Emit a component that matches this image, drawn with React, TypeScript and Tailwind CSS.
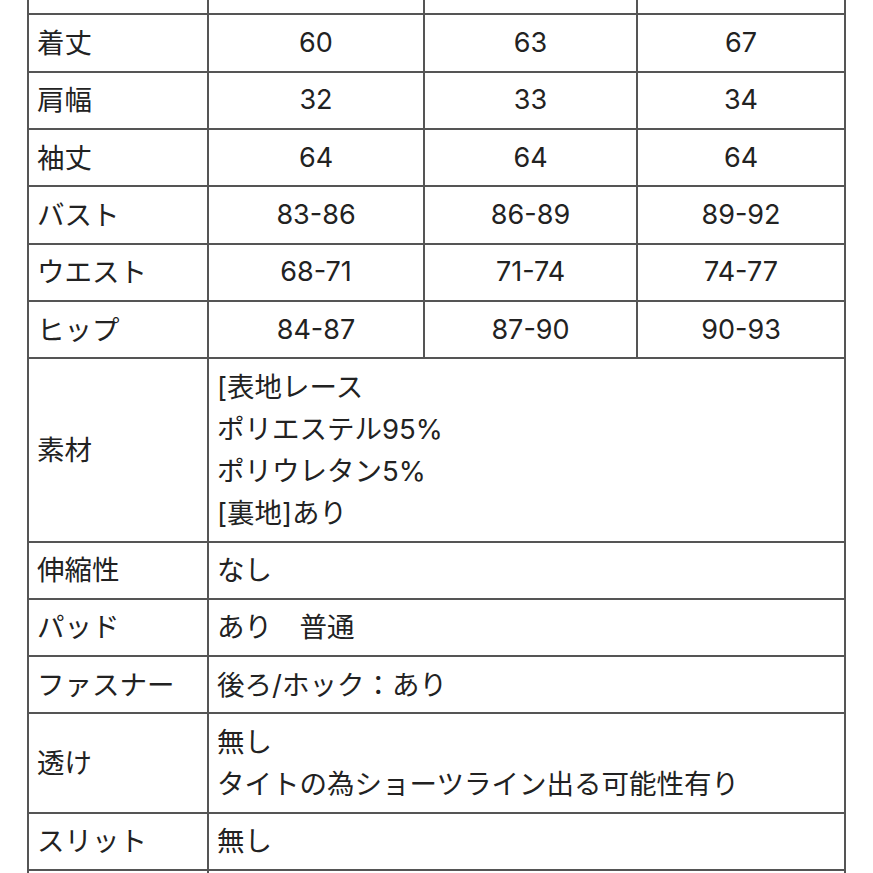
const sizes = [
  { label: '着丈', values: ['60', '63', '67'] },
  { label: '肩幅', values: ['32', '33', '34'] },
  { label: '袖丈', values: ['64', '64', '64'] },
  { label: 'バスト', values: ['83-86', '86-89', '89-92'] },
  { label: 'ウエスト', values: ['68-71', '71-74', '74-77'] },
  { label: 'ヒップ', values: ['84-87', '87-90', '90-93'] },
];

const details: { label: string; lines: string[] }[] = [
  { label: '素材', lines: ['[表地レース', 'ポリエステル95%', 'ポリウレタン5%', '[裏地]あり'] },
  { label: '伸縮性', lines: ['なし'] },
  { label: 'パッド', lines: ['あり　普通'] },
  { label: 'ファスナー', lines: ['後ろ/ホック：あり'] },
  { label: '透け', lines: ['無し', 'タイトの為ショーツライン出る可能性有り'] },
  { label: 'スリット', lines: ['無し'] },
];

const cell = 'border-2 border-[#555] px-2 py-[6.67px] align-middle';

export default function App() {
  return (
    <div className="h-[873px] overflow-hidden bg-white px-[27px] font-['Inter','Noto_Sans_CJK_JP',sans-serif] text-[27.5px] leading-[42px] text-[#222]">
      <table className="-mt-[44px] w-full table-fixed border-collapse">
        <colgroup>
          <col className="w-[180px]" />
          <col className="w-[216px]" />
          <col className="w-[213px]" />
          <col />
        </colgroup>
        <tbody>
          <tr>
            <td className={cell}>&nbsp;</td>
            <td className={cell}></td>
            <td className={cell}></td>
            <td className={cell}></td>
          </tr>
          {sizes.map((row) => (
            <tr key={row.label}>
              <td className={cell}>{row.label}</td>
              {row.values.map((v, i) => (
                <td key={i} className={`${cell} text-center text-[27px]`}>
                  {v}
                </td>
              ))}
            </tr>
          ))}
          {details.map((row) => (
            <tr key={row.label}>
              <td className={cell}>{row.label}</td>
              <td className={cell} colSpan={3}>
                {row.lines.map((l, i) => (
                  <div key={i}>{l}</div>
                ))}
              </td>
            </tr>
          ))}
          <tr>
            <td className={cell}>&nbsp;</td>
            <td className={cell} colSpan={3}></td>
          </tr>
        </tbody>
      </table>
    </div>
  );
}
